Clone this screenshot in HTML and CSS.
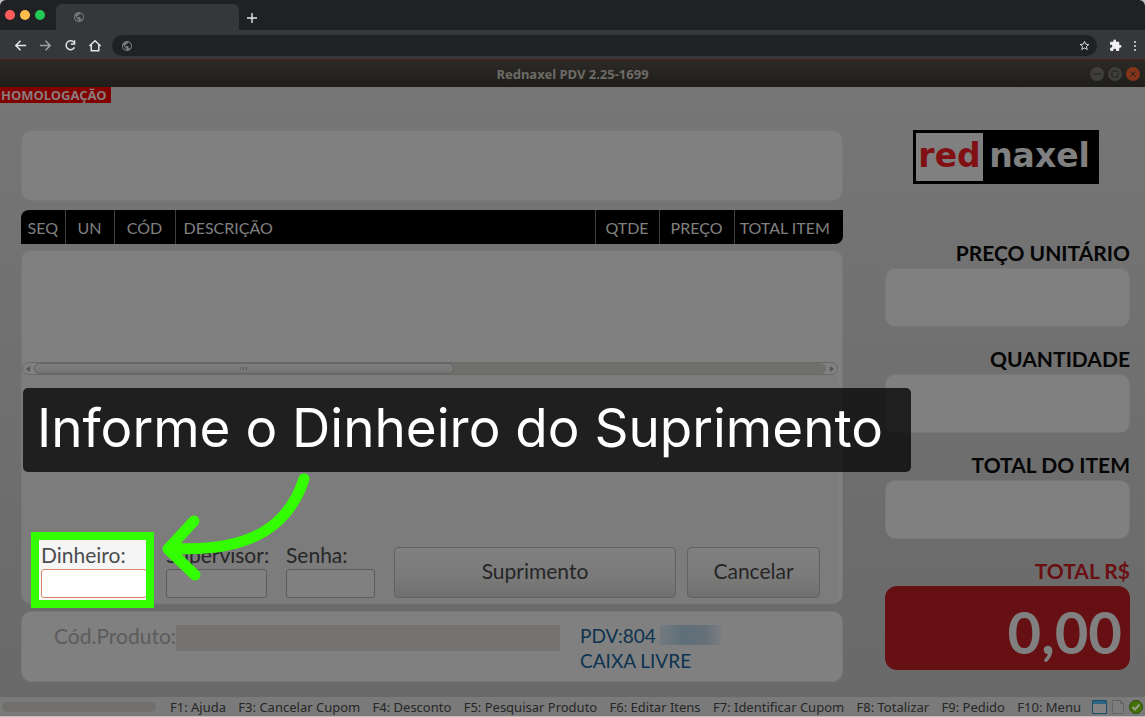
FILE: index.html
```
<!DOCTYPE html>
<html lang="pt-BR">

<head>
    <meta charset="UTF-8">
    <meta name="viewport" content="width=device-width, initial-scale=1.0">
    <title>Rednaxel PDV 2.25-1699</title>
    <link rel="stylesheet" href="styles.css">
</head>

<body>
    <svg width="0" height="0" class="defs">
        <symbol id="globe" viewBox="0 0 24 24">
            <path d="M12 2C6.48 2 2 6.48 2 12s4.48 10 10 10 10-4.48 10-10S17.52 2 12 2zm-1 17.93c-3.95-.49-7-3.85-7-7.93 0-.62.08-1.21.21-1.79L9 15v1c0 1.1.9 2 2 2v1.93zm6.9-2.54c-.26-.81-1-1.39-1.9-1.39h-1v-3c0-.55-.45-1-1-1H8v-2h2c.55 0 1-.45 1-1V7h2c1.1 0 2-.9 2-2v-.41c2.93 1.19 5 4.06 5 7.41 0 2.08-.8 3.97-2.1 5.39z"/>
        </symbol>
    </svg>

    <!-- navegador -->
    <header class="browser">
        <div class="tabs">
            <span class="light red"></span>
            <span class="light yellow"></span>
            <span class="light green"></span>
            <div class="tab"><svg class="globe"><use href="#globe"/></svg></div>
            <button class="new-tab" aria-label="Nova aba">
                <svg viewBox="0 0 10 10"><path d="M5 0v10M0 5h10"/></svg>
            </button>
        </div>
        <div class="toolbar">
            <button aria-label="Voltar"><svg viewBox="0 0 16 16"><path d="M14 8H3M8 3L3 8l5 5"/></svg></button>
            <button aria-label="Avançar" class="off"><svg viewBox="0 0 16 16"><path d="M2 8h11M8 3l5 5-5 5"/></svg></button>
            <button aria-label="Recarregar"><svg viewBox="0 0 16 16"><path d="M11.500 4.500A4.700 4.700 0 1 0 12.200 10M12.300 2.500v4h-4"/></svg></button>
            <button aria-label="Início"><svg viewBox="0 0 16 16"><path d="M1.500 8.500L7.500 3l6 5.500M3.500 7.500v6h8v-6"/></svg></button>
            <div class="address">
                <svg class="globe"><use href="#globe"/></svg>
                <input type="text" aria-label="Endereço">
                <svg class="star" viewBox="0 0 24 24"><path d="M12 3l2.700 6.200 6.800.6-5.200 4.400 1.600 6.600-5.900-3.500-5.900 3.500 1.600-6.600L2.500 9.800l6.800-.6z"/></svg>
            </div>
            <svg class="puzzle" viewBox="0 0 24 24"><path d="M20.500 11H19V7c0-1.100-.9-2-2-2h-4V3.500a2.500 2.500 0 0 0-5 0V5H4c-1.100 0-2 .9-2 2v3.800h1.500a2.700 2.700 0 0 1 0 5.400H2V20c0 1.100.9 2 2 2h3.800v-1.500a2.700 2.700 0 0 1 5.400 0V22H17c1.100 0 2-.9 2-2v-4h1.500a2.500 2.500 0 0 0 0-5z"/></svg>
            <svg class="dots" viewBox="0 0 4 12"><circle cx="2" cy="2" r="1"/><circle cx="2" cy="6" r="1"/><circle cx="2" cy="10" r="1"/></svg>
        </div>
    </header>

    <div class="titlebar">
        <h1>Rednaxel PDV 2.25-1699</h1>
        <div class="window-buttons">
            <button aria-label="Minimizar"><svg viewBox="0 0 14 14"><path d="M3 7h8"/></svg></button>
            <button aria-label="Maximizar"><svg viewBox="0 0 14 14"><path d="M4 4h6v6H4z"/></svg></button>
            <button aria-label="Fechar" class="close"><svg viewBox="0 0 14 14"><path d="M4.500 4.500l5 5M9.500 4.500l-5 5"/></svg></button>
        </div>
    </div>

    <main>
        <strong class="badge">HOMOLOGAÇÃO</strong>

        <div class="columns">
            <section class="left">
                <div class="panel display"></div>

                <table>
                    <colgroup>
                        <col class="seq"><col class="un"><col class="cod"><col>
                        <col class="qtde"><col class="preco"><col class="total">
                    </colgroup>
                    <tr>
                        <th>SEQ</th>
                        <th>UN</th>
                        <th>CÓD</th>
                        <th class="desc">DESCRIÇÃO</th>
                        <th>QTDE</th>
                        <th>PREÇO</th>
                        <th>TOTAL ITEM</th>
                    </tr>
                </table>

                <div class="panel items">
                    <div class="scrollbar">
                        <svg viewBox="0 0 4 6"><path d="M4 0v6L0 3z"/></svg>
                        <div class="track"><div class="thumb"><i></i><i></i><i></i></div></div>
                        <svg viewBox="0 0 4 6"><path d="M0 0v6l4-3z"/></svg>
                    </div>

                    <form>
                        <div class="field dinheiro">
                            <label for="dinheiro">Dinheiro:</label>
                            <input type="text" id="dinheiro">
                        </div>
                        <div class="field supervisor">
                            <label for="supervisor">Supervisor:</label>
                            <input type="text" id="supervisor">
                        </div>
                        <div class="field senha">
                            <label for="senha">Senha:</label>
                            <input type="password" id="senha">
                        </div>
                        <button type="button" class="suprimento">Suprimento</button>
                        <button type="button" class="cancelar">Cancelar</button>
                    </form>

                    <div class="tip">Informe o Dinheiro do Suprimento</div>
                    <svg class="arrow" viewBox="155 470 160 115">
                        <path d="M304 479C290 522 255 554 170 548M194 521L168 549l27 26"/>
                    </svg>
                </div>

                <div class="panel product">
                    <label for="produto">Cód.Produto:</label>
                    <input type="text" id="produto" disabled>
                    <div class="pdv">
                        <div>PDV:804<span class="hidden-number"></span></div>
                        <div>CAIXA LIVRE</div>
                    </div>
                </div>
            </section>

            <aside>
                <div class="logo"><span>red</span><b>naxel</b></div>
                <label for="unitario">PREÇO UNITÁRIO</label>
                <input type="text" id="unitario" readonly>
                <label for="quantidade">QUANTIDADE</label>
                <input type="text" id="quantidade" readonly>
                <label for="item">TOTAL DO ITEM</label>
                <input type="text" id="item" readonly>
                <label for="total" class="total-label">TOTAL R$</label>
                <output id="total">0,00</output>
            </aside>
        </div>
    </main>

    <footer>
        <div class="progress"></div>
        <div class="keys">
            <span>F1: Ajuda</span>
            <span>F3: Cancelar Cupom</span>
            <span>F4: Desconto</span>
            <span>F5: Pesquisar Produto</span>
            <span>F6: Editar Itens</span>
            <span>F7: Identificar Cupom</span>
            <span>F8: Totalizar</span>
            <span>F9: Pedido</span>
            <span>F10: Menu</span>
        </div>
        <div class="status-icons">
            <svg width="15" height="14" viewBox="0 0 15 14"><path fill="#848484" stroke="#1d4c66" d="M.5.5h14v13H.5z"/><path fill="#2b6484" d="M1 1h13v3H1z"/></svg>
            <svg width="12" height="14" viewBox="0 0 12 14"><path fill="#7d7d7d" stroke="#646464" d="M.5.5h8l3 3v10H.5zM8.500.5v3h3"/></svg>
            <svg width="14" height="14" viewBox="0 0 14 14"><circle cx="7" cy="7" r="6.500" fill="#457206" stroke="#2f4e06"/><path fill="none" stroke="#959f8b" stroke-width="2" d="M3.500 7l2.500 2.500 4.500-5"/></svg>
        </div>
    </footer>
</body>

</html>
```
FILE: styles.css
```
* {
    margin: 0;
    padding: 0;
    box-sizing: border-box;
}

body {
    min-height: 100vh;
    display: flex;
    flex-direction: column;
    background-color: #bebebe;
    padding-bottom: 1px;
    font-family: Lato, "Noto Sans", sans-serif;
    color: #262626;
}

button {
    border: none;
    background: none;
}

input {
    min-width: 0;
    font: inherit;
}

.defs {
    position: absolute;
}

/* navegador */
.browser {
    background-color: #202124;
    border-radius: 6px 6px 0 0;
}

.tabs {
    display: flex;
    height: 30px;
    align-items: center;
    padding-left: 5px;
}

.light {
    width: 10px;
    height: 10px;
    margin-right: 5px;
    border-radius: 50%;
}

.red {
    background-color: #ff5c5c;
}

.yellow {
    background-color: #ffbd4c;
}

.green {
    background-color: #22c955;
}

.tab {
    align-self: flex-end;
    width: 183px;
    height: 26px;
    margin-left: 6px;
    padding: 7px 17px;
    background-color: #36373a;
    border-radius: 6px 6px 0 0;
}

.globe {
    display: block;
    flex: none;
    width: 12px;
    height: 12px;
    fill: #75777b;
}

.new-tab {
    width: 10px;
    height: 10px;
    margin: 6px 0 0 8px;
}

.new-tab svg,
.toolbar button svg {
    display: block;
    fill: none;
    stroke: #e4e5e7;
}

.new-tab svg {
    stroke-width: 1.4;
}

.toolbar {
    display: flex;
    align-items: center;
    height: 29px;
    padding: 2px 8px 0 13px;
    background-color: #36373a;
}

.toolbar button {
    width: 15px;
    margin-right: 10px;
}

.toolbar button svg {
    stroke-width: 1.6;
}

.toolbar .off svg {
    stroke: #a0a1a3;
}

.address {
    display: flex;
    flex: 1;
    align-items: center;
    height: 21px;
    padding: 0 7px 0 9px;
    margin-left: -1px;
    background-color: #202124;
    border-radius: 11px;
}

.address input {
    flex: 1;
    background: none;
    border: none;
}

.star {
    width: 11px;
    height: 11px;
    fill: none;
    stroke: #e4e5e7;
    stroke-width: 2;
}

.puzzle {
    width: 13px;
    height: 13px;
    margin: 0 11px 0 12px;
    fill: #f1f1f3;
}

.dots {
    width: 4px;
    height: 12px;
    fill: #e4e5e7;
}

/* janela */
.titlebar {
    display: grid;
    grid-template-columns: 1fr auto 1fr;
    align-items: center;
    height: 28px;
    padding: 0 5px;
    border-top: 1px solid #4a2019;
    background: linear-gradient(#2b2a26, #1f1e1a);
}

.titlebar h1 {
    grid-column: 2;
    font: bold 13px "Noto Sans", sans-serif;
    color: #6d6b66;
}

.window-buttons {
    display: flex;
    justify-content: flex-end;
    gap: 4px;
}

.window-buttons button {
    width: 14px;
    height: 14px;
    background-color: #3f3e3a;
    border-radius: 50%;
}

.window-buttons svg {
    display: block;
    fill: none;
    stroke: #23221e;
}

.window-buttons .close {
    background-color: #84341a;
}

main {
    display: flex;
    flex: 1;
    flex-direction: column;
    background: linear-gradient(#767676, #696969);
}

.badge {
    align-self: flex-start;
    height: 16px;
    padding: 0 4px 0 1px;
    background-color: #800000;
    font: bold 13px/16px "Noto Sans", sans-serif;
    color: #8a7c7c;
}

.columns {
    display: flex;
    flex: 1;
    gap: 42px;
    padding: 27px 15px 15px 21px;
}

.left {
    display: flex;
    flex: 1;
    flex-direction: column;
}

.panel {
    background-color: #808080;
    border: 1px solid #787878;
    border-radius: 10px;
}

.display {
    height: 71px;
}

table {
    width: 100%;
    height: 34px;
    margin: 9px 0 6px;
    table-layout: fixed;
    border-collapse: collapse;
    background-color: #000;
    border-radius: 8px 0 8px 0;
}

th {
    border-left: 1px solid #404040;
    font-size: 16px;
    font-weight: normal;
    color: #808080;
}

th:first-child {
    border-left: none;
}

th:last-child {
    padding-right: 8px;
}

.desc {
    padding-left: 8px;
    text-align: left;
}

.seq {
    width: 44px;
}

.un {
    width: 49px;
}

.cod {
    width: 61px;
}

.qtde {
    width: 64px;
}

.preco {
    width: 75px;
}

.total {
    width: 109px;
}

.items {
    position: relative;
    display: flex;
    flex: 1;
    flex-direction: column;
    min-height: 354px;
    padding-top: 111px;
}

.scrollbar {
    display: flex;
    align-items: center;
    height: 13px;
    margin-right: 4px;
    padding: 0 3px;
    border: 1px solid #6a6a6a;
    border-radius: 6px;
}

.scrollbar svg {
    width: 4px;
    height: 6px;
    fill: #555;
}

.track {
    flex: 1;
    height: 11px;
    margin: 0 4px;
    background-color: #706f6c;
    border-radius: 6px;
}

.thumb {
    display: flex;
    align-items: center;
    justify-content: center;
    gap: 2px;
    width: 53%;
    height: 11px;
    border: 1px solid #656462;
    border-radius: 6px;
    background: linear-gradient(#7f7f7f, #757472);
}

.thumb i {
    width: 1px;
    height: 3px;
    background-color: #5c5b59;
}

form {
    display: flex;
    flex: 1;
    align-items: flex-end;
    gap: 19px;
    margin-right: 3px;
    padding: 0 19px 5px;
    background-color: #7c7c7c;
    border-radius: 0 0 8px 8px;
}

.field {
    display: flex;
    flex-direction: column;
    font-size: 21px;
    line-height: 28px;
    white-space: nowrap;
}

.field input {
    height: 29px;
    border: 1px solid #5c5c5c;
    border-radius: 3px;
    background-color: #808080;
}

.dinheiro {
    position: relative;
    isolation: isolate;
    width: 106px;
    color: #4c4c4c;
}

.dinheiro input {
    border-color: #dc8468;
    background-color: #fff;
}

/* destaque em volta do campo */
.dinheiro::before,
.dinheiro::after {
    content: "";
    position: absolute;
    inset: -9px -7px -10px -10px;
    border: 8px solid #3f0;
}

.dinheiro::before {
    z-index: -1;
    background-color: #f5f5f5;
}

.supervisor {
    width: 101px;
}

.senha {
    width: 89px;
}

form button {
    height: 51px;
    padding-bottom: 5px;
    border: 1px solid #62615f;
    border-radius: 4px;
    background: linear-gradient(#808080, #7a7a7a 60%, #706f6d);
    font: 21px Lato, "Noto Sans", sans-serif;
    color: #262626;
}

.suprimento {
    flex: 1;
}

.cancelar {
    width: 133px;
    margin-left: -8px;
}

.tip {
    position: absolute;
    top: 137px;
    left: 1px;
    padding: 0 28px 4px 14px;
    border-radius: 5px;
    background-color: rgba(0, 0, 0, .75);
    font: 53px/80px Inter, sans-serif;
    color: #fff;
    white-space: nowrap;
}

.arrow {
    position: absolute;
    top: 219px;
    left: 133px;
    width: 160px;
    height: 115px;
    fill: none;
    stroke: #3f0;
    stroke-width: 11;
    stroke-linecap: round;
    stroke-linejoin: round;
}

.product {
    display: flex;
    height: 71px;
    margin-top: 7px;
    padding: 11px 0 0 32px;
    font-size: 21px;
    line-height: 25px;
}

.product label {
    width: 122px;
    color: #5c5c5c;
}

.product input {
    width: 384px;
    height: 26px;
    margin-top: 2px;
    border: none;
    background-color: #757370;
}

.pdv {
    margin-left: 20px;
    font-size: 19px;
    color: #0c3350;
}

.hidden-number {
    display: inline-block;
    width: 61px;
    height: 20px;
    margin: 2px 0 0 4px;
    vertical-align: top;
    background: linear-gradient(90deg, #727a80, #5f6e78 40%, #667079 75%, #7a7d80);
}

/* totais */
aside {
    display: flex;
    flex-direction: column;
    width: 245px;
}

.logo {
    display: flex;
    width: 186px;
    height: 54px;
    margin: 0 0 54px 28px;
    padding: 3px;
    background-color: #000;
    font: bold 33px/46px "DejaVu Sans", sans-serif;
    color: #808080;
}

.logo span {
    width: 67px;
    background-color: #808080;
    text-align: center;
    color: #801014;
}

.logo b {
    flex: 1;
    text-align: center;
}

aside label {
    font-size: 21px;
    font-weight: bold;
    line-height: 30px;
    text-align: right;
    color: #050505;
}

aside input {
    height: 59px;
    margin-bottom: 17px;
    background-color: #808080;
    border: 1px solid #787878;
    border-radius: 10px;
}

aside .total-label {
    color: #6a0f12;
}

output {
    height: 84px;
    padding: 0 8px;
    border-radius: 12px;
    background-color: #661013;
    font-size: 58px;
    font-weight: bold;
    line-height: 92px;
    text-align: right;
    color: #808080;
}

footer {
    display: flex;
    align-items: center;
    height: 19px;
    padding: 0 2px;
    background-color: #7a7a7a;
}

.progress {
    width: 154px;
    height: 10px;
    border-radius: 5px;
    background-color: #706f6c;
}

.keys {
    display: flex;
    flex: 1;
    justify-content: space-between;
    padding: 0 11px 0 14px;
    font: 13px/18px "Noto Sans", sans-serif;
    white-space: nowrap;
}

.status-icons {
    display: flex;
    align-items: center;
    gap: 5px;
}
```
